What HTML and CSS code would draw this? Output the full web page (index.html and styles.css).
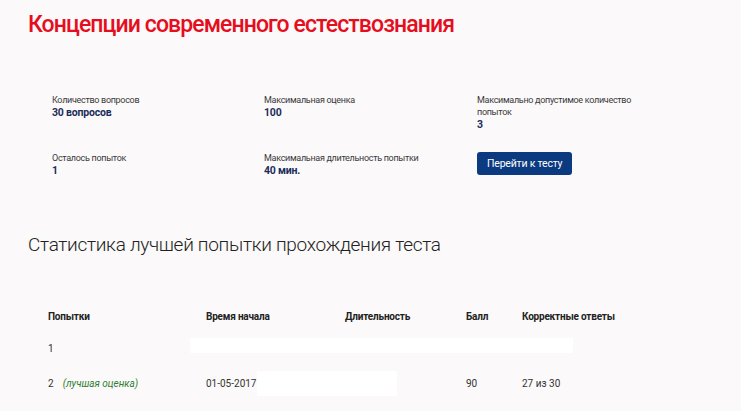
FILE: index.html
```html
<!DOCTYPE html>
<html lang="ru">
<head>
<meta charset="utf-8">
<title>Концепции современного естествознания</title>
<link rel="stylesheet" href="styles.css">
</head>
<body>
<main class="page">
  <h1 class="title">Концепции современного естествознания</h1>

  <section class="info">
    <div class="info-item">
      <div class="info-label">Количество вопросов</div>
      <div class="info-value">30 вопросов</div>
    </div>
    <div class="info-item">
      <div class="info-label">Максимальная оценка</div>
      <div class="info-value">100</div>
    </div>
    <div class="info-item">
      <div class="info-label">Максимально допустимое количество попыток</div>
      <div class="info-value">3</div>
    </div>
    <div class="info-item">
      <div class="info-label">Осталось попыток</div>
      <div class="info-value">1</div>
    </div>
    <div class="info-item">
      <div class="info-label">Максимальная длительность попытки</div>
      <div class="info-value">40 мин.</div>
    </div>
    <div class="info-item">
      <button class="btn" type="button">Перейти к тесту</button>
    </div>
  </section>

  <h2 class="subtitle">Статистика лучшей попытки прохождения теста</h2>

  <section class="stats">
    <div class="cell head">Попытки</div>
    <div class="cell head">Время начала</div>
    <div class="cell head">Длительность</div>
    <div class="cell head">Балл</div>
    <div class="cell head">Корректные ответы</div>

    <div class="cell">1</div>
    <div class="cell span-rest"><span class="mask mask-wide"></span></div>

    <div class="cell">2 <em class="best">(лучшая оценка)</em></div>
    <div class="cell">01-05-2017<span class="mask mask-short"></span></div>
    <div class="cell"></div>
    <div class="cell">90</div>
    <div class="cell">27 из 30</div>
  </section>
</main>
</body>
</html>
```

FILE: styles.css
```css
* { box-sizing: border-box; }

html, body {
  margin: 0;
  background: #fbf9f9;
}

body {
  font-family: Roboto, "Noto Sans", sans-serif;
  color: #2b2b2b;
}

.page {
  padding: 0 28px;
}

.title {
  margin: 0;
  padding-top: 10px;
  font-weight: 500;
  font-size: 23px;
  line-height: 30px;
  letter-spacing: -0.9px;
  color: #e60d1d;
}

.info {
  display: grid;
  grid-template-columns: 212px 213px 160px;
  row-gap: 20px;
  padding: 54px 0 0 24px;
}

.info-item {
  min-height: 36px;
}

.info-label {
  font-size: 9px;
  line-height: 12px;
  letter-spacing: -0.3px;
  color: #3a3a3a;
}

.info-value {
  font-size: 10.5px;
  line-height: 14px;
  font-weight: 700;
  letter-spacing: -0.2px;
  color: #1c2d5a;
}

.btn {
  margin-top: -1px;
  height: 23px;
  padding: 0 10px;
  border: 0;
  border-radius: 3px;
  background: #0b3a80;
  color: #fff;
  font-family: Roboto, sans-serif;
  font-size: 10.5px;
  letter-spacing: -0.2px;
}

.subtitle {
  margin: 0;
  padding-top: 44px;
  font-weight: 300;
  font-size: 19px;
  line-height: 26px;
  letter-spacing: -0.3px;
  color: #222;
}

.stats {
  display: grid;
  grid-template-columns: 158px 139px 121px 56px 1fr;
  grid-template-rows: 30px 34px 36px;
  padding: 43px 0 0 20px;
  font-size: 10px;
  color: #333;
}

.cell {
  display: flex;
  align-items: center;
  white-space: nowrap;
}

.head {
  font-weight: 700;
  color: #222;
  letter-spacing: -0.2px;
}

.span-rest {
  grid-column: 2 / 6;
}

.best {
  margin-left: 9px;
  color: #2e7d32;
  font-style: italic;
}

.mask {
  display: inline-block;
  flex-shrink: 0;
  background: #fff;
}

.mask-wide {
  margin-left: -16px;
  margin-bottom: 5px;
  width: 383px;
  height: 15px;
}

.mask-short {
  width: 140px;
  height: 25px;
}
```
